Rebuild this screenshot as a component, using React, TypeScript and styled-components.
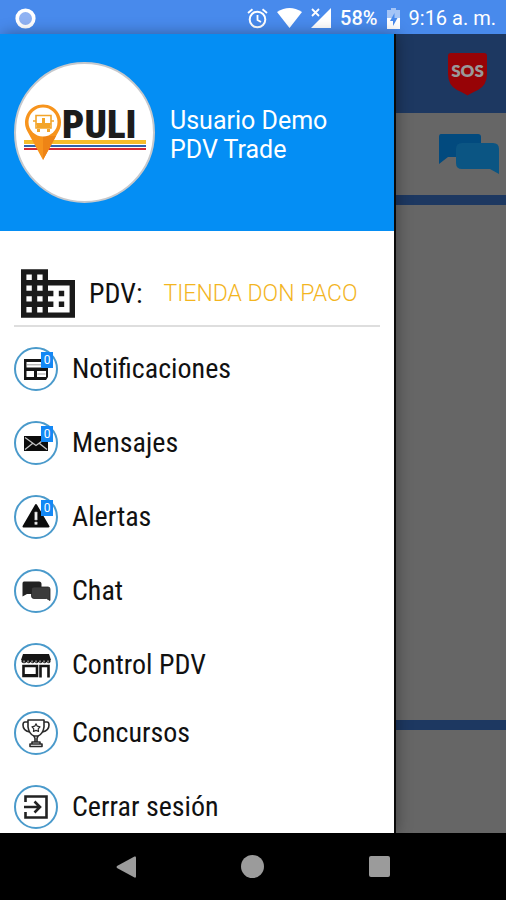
import React from "react";
import styled, { createGlobalStyle } from "styled-components";

const GlobalStyle = createGlobalStyle`
  *, *::before, *::after { box-sizing: border-box; }
  body { margin: 0; background: #000; font-family: Roboto, "Noto Sans", sans-serif; }
  button { font: inherit; color: inherit; background: none; border: 0; padding: 0; cursor: pointer; }
  svg { display: block; flex: none; }
`;

const CONDENSED = `"Roboto Condensed", "Liberation Sans Narrow", Roboto, sans-serif`;

const Screen = styled.div`
  display: flex;
  flex-direction: column;
  min-height: 100vh;
`;

const StatusBar = styled.header`
  display: flex;
  align-items: center;
  justify-content: space-between;
  height: 34px;
  padding: 2px 10px 0 15px;
  background: #488aec;
  color: #fff;
`;

const StatusIcons = styled.div`
  display: flex;
  align-items: center;
  gap: 9px;
`;

const StatusText = styled.span<{ $bold?: boolean }>`
  font-size: 20px;
  line-height: 24px;
  font-weight: ${(p) => (p.$bold ? 500 : 400)};
`;

const Stage = styled.div`
  position: relative;
  display: flex;
  flex: 1;
`;

const HomePage = styled.main`
  display: flex;
  flex: 1;
  flex-direction: column;
  background: #666;
`;

const HomeToolbar = styled.div`
  display: flex;
  justify-content: flex-end;
  height: 79px;
  padding: 18px 18px 0 0;
  background: #1d3861;
`;

const HomeActions = styled.div`
  display: flex;
  justify-content: flex-end;
  height: 82px;
  padding: 20px 6px 0 0;
`;

const Stripe = styled.div`
  height: 10px;
  background: #1d3861;
`;

const HomeBody = styled.div`
  flex: 1;
`;

const HomeFooter = styled.div`
  height: 103px;
`;

const Drawer = styled.aside`
  position: absolute;
  inset: 0 112px 0 0;
  display: flex;
  flex-direction: column;
  background: #fff;
  box-shadow: 2px 0 0 #0a0a0a, 3px 0 14px rgba(0, 0, 0, 0.35);
`;

const Profile = styled.div`
  display: flex;
  align-items: center;
  gap: 15px;
  height: 197px;
  padding: 0 14px;
  background: #048ef4;
`;

const Avatar = styled.div`
  flex: none;
  width: 141px;
  height: 141px;
  overflow: hidden;
  border: 2px solid #c6c8cc;
  border-radius: 50%;
  background: #fff;
`;

const UserName = styled.p`
  margin: 0 0 -4px;
  color: #fff;
  font-size: 25px;
  line-height: 29px;
`;

const StoreRow = styled.div`
  display: flex;
  align-items: center;
  height: 65px;
  margin: 31px 14px 0;
  padding-left: 7px;
  border-bottom: 2px solid #dedede;
`;

const StoreLabel = styled.span`
  margin-left: 14px;
  color: #111;
  font-family: ${CONDENSED};
  font-size: 28px;
  line-height: 32px;
`;

const StoreName = styled.span`
  margin-left: 21px;
  color: #f3b51f;
  font-size: 23px;
  font-weight: 300;
  line-height: 32px;
  white-space: nowrap;
`;

const Menu = styled.nav`
  display: flex;
  flex-direction: column;
  gap: 24px;
  padding: 20px 14px 0;
`;

const MenuGroup = styled.ul`
  display: flex;
  flex-direction: column;
  gap: 30px;
  margin: 0;
  padding: 0;
  list-style: none;
`;

const MenuButton = styled.button`
  display: flex;
  align-items: center;
  gap: 14px;
  width: 100%;
  color: #111;
  text-align: left;
  font-family: ${CONDENSED};
  font-size: 28px;
  line-height: 32px;
`;

const IconCircle = styled.span`
  position: relative;
  display: flex;
  flex: none;
  align-items: center;
  justify-content: center;
  width: 44px;
  height: 44px;
  border: 2px solid #4a9acb;
  border-radius: 50%;
`;

const Badge = styled.span`
  position: absolute;
  top: 3px;
  right: 3px;
  width: 12px;
  height: 16px;
  background: #1488f5;
  color: #fff;
  font-family: Roboto, sans-serif;
  font-size: 12px;
  line-height: 16px;
  text-align: center;
`;

const NavBar = styled.footer`
  display: flex;
  align-items: center;
  justify-content: space-around;
  height: 67px;
  padding: 0 63px;
  background: #000;
`;

const NavButton = styled.button`
  display: flex;
  align-items: center;
  justify-content: center;
  width: 48px;
  height: 48px;
`;

const PuliLogo = () => (
  <svg width="137" height="137" viewBox="16 64 137 137" role="img" aria-label="PULI">
    <rect x="24" y="140" width="122" height="4" fill="#f5bd2c" />
    <rect x="24" y="144" width="122" height="1" fill="#fff" />
    <rect x="24" y="145" width="122" height="2" fill="#2f62ae" />
    <rect x="24" y="148" width="122" height="2" fill="#d02a36" />
    <path d="M43 160 L27.200 131 A18 18 0 1 1 58.800 131 Z" fill="#f7941d" />
    <path d="M43 160 V136 H56 Z" fill="#ee8416" />
    <circle cx="43" cy="122" r="14.5" fill="#fff" />
    <g fill="none" stroke="#f3a52a" strokeWidth="1.6">
      <path d="M36 115.500 H51 V128 H36 Z M36 124 H51 M33 121 H36 M51 121 H54" />
    </g>
    <path d="M37 123 h13 v5 h-13z M37 129 h3 v3 h-3z M47 129 h3 v3 h-3z M42 118 h3 v5 h-3z" fill="#f3a52a" />
    <text x="62" y="138" fontFamily="Roboto Condensed, Roboto, sans-serif" fontWeight="900" fontSize="39" fill="#1c1c1c">
      PULI
    </text>
  </svg>
);

const BuildingIcon = () => (
  <svg width="54" height="49" viewBox="2 3 20 18" fill="#1a1a1a" aria-hidden="true">
    <path d="M12 7V3H2v18h20V7H12zM6 19H4v-2h2v2zm0-4H4v-2h2v2zm0-4H4V9h2v2zm0-4H4V5h2v2zm4 12H8v-2h2v2zm0-4H8v-2h2v2zm0-4H8V9h2v2zm0-4H8V5h2v2zm10 12h-8v-2h2v-2h-2v-2h2v-2h-2V9h8v10zm-2-8h-2v2h2v-2zm0 4h-2v2h2v-2z" />
  </svg>
);

const glyph = { width: 32, height: 32, viewBox: "0 0 32 32", "aria-hidden": true } as const;

const NewsIcon = () => (
  <svg {...glyph}>
    <path d="M4 6 H28 V24 L26 27 H4 Z" fill="#151515" />
    <path d="M6.500 9 H26 V14.500 H6.500 Z M6.500 18 H14 V24 H6.500 Z M17 18 H26 V24 H17 Z" fill="#fff" />
    <path d="M7 11.800 H25.500 M17.500 21 H25.500" stroke="#999" strokeWidth="1" />
  </svg>
);

const MailIcon = () => (
  <svg {...glyph}>
    <rect x="4" y="9" width="24" height="15" fill="#0c0c0c" />
    <path d="M5 10.500 L16 18.500 L27 10.500 M5 22.500 L12.500 16.500 M27 22.500 L19.500 16.500" fill="none" stroke="#c4c4c4" strokeWidth="1.300" />
  </svg>
);

const AlertIcon = () => (
  <svg {...glyph}>
    <path d="M16 4 L28.500 25.500 H3.500 Z" fill="#0c0c0c" stroke="#0c0c0c" strokeWidth="2" strokeLinejoin="round" />
    <path d="M14.800 11 h2.400 v8 h-2.400z M14.800 21 h2.400 v2.400 h-2.400z" fill="#fff" stroke="#aaa" strokeWidth=".6" />
  </svg>
);

const ChatIcon = () => (
  <svg {...glyph}>
    <path d="M4 6.500 H19 Q21.500 6.500 21.500 9 V17 Q21.500 19 19 19 H7 L2.500 21.500 V8.500 Q2.500 6.500 4 6.500Z" fill="#222" />
    <path d="M14 12 H28 Q30 12 30 14 V25.500 L26.500 23.500 H14 Q11.500 23.500 11.500 21 V14 Q11.500 12 14 12Z" fill="#3c3c3c" stroke="#222" strokeWidth=".8" />
  </svg>
);

const StoreIcon = () => (
  <svg {...glyph}>
    <path d="M3 5 H29 L31 11 H1 Z" fill="#151515" />
    <path d="M1.500 11 H30.500 V13 Q28.500 15.500 26.500 13 Q24.500 15.500 22.500 13 Q20.500 15.500 18.500 13 Q16.500 15.500 14.500 13 Q12.500 15.500 10.500 13 Q8.500 15.500 6.500 13 Q4 15.500 1.500 13Z" fill="#151515" />
    <path d="M4 11.500 v2 M8 11.500 v2 M12 11.500 v2 M16 11.500 v2 M20 11.500 v2 M24 11.500 v2 M28 11.500 v2" stroke="#ddd" strokeWidth="1" />
    <path d="M3.500 17 H17 V27 H3.500 Z M20.500 28.500 V17 H28.500 V28.500" fill="none" stroke="#151515" strokeWidth="2.600" />
    <path d="M3 25 H17 V28 H3 Z" fill="#151515" />
  </svg>
);

const TrophyIcon = () => (
  <svg {...glyph} fill="none" stroke="#2a2a2a" strokeWidth="1.600" strokeLinejoin="round">
    <path d="M8 3 H24 V10 Q23 17 18 19 H14 Q9 17 8 10 Z" />
    <path d="M8 5 H5 Q3 5 3 8 Q3 13.500 9.500 15 M24 5 H27 Q29 5 29 8 Q29 13.500 22.500 15" />
    <path d="M16 6.800 L17.300 9.200 L20 9.800 L18.200 11.800 L18.500 14.500 L16 13.400 L13.500 14.500 L13.800 11.800 L12 9.800 L14.700 9.200 Z" strokeWidth="1.200" />
    <path d="M14 19 L15 21.500 V25 M18 19 L17 21.500 V25 M12 25 H20 V27 H12 Z M10 27 H22 V29.500 H10 Z" />
  </svg>
);

const ExitIcon = () => (
  <svg {...glyph} fill="none" stroke="#222" strokeWidth="2.600">
    <path d="M5.500 11 V5.500 H26.500 V26.500 H5.500 V21" />
    <path d="M4 16 H19 M14.500 10.500 L20 16 L14.500 21.500" />
  </svg>
);

const SosIcon = () => (
  <svg width="41" height="44" viewBox="0 0 41 44" role="img" aria-label="SOS">
    <path d="M4 1 H37 Q40 1 40 4 V22 Q40 33 31 38 Q24 41 20.500 43.500 Q17 41 10 38 Q1 33 1 22 V4 Q1 1 4 1Z" fill="#970306" />
    <text x="20.500" y="25" textAnchor="middle" fontFamily="Lato, sans-serif" fontWeight="800" fontSize="17" fill="#999">
      SOS
    </text>
  </svg>
);

const TalkIcon = () => (
  <svg width="62" height="42" viewBox="0 0 62 42" aria-hidden="true">
    <path d="M3 1 H40 Q43 1 43 4 V21 Q43 24 40 24 H10 L1 31 V4 Q1 1 3 1Z" fill="#024a7e" />
    <path d="M24 10 H55 Q61 10 61 16 V41 L52 36 H24 Q18 36 18 30 V16 Q18 10 24 10Z" fill="#0b5583" />
  </svg>
);

type Item = { label: string; Icon: React.FC; badge?: number };

const mainItems: Item[] = [
  { label: "Notificaciones", Icon: NewsIcon, badge: 0 },
  { label: "Mensajes", Icon: MailIcon, badge: 0 },
  { label: "Alertas", Icon: AlertIcon, badge: 0 },
  { label: "Chat", Icon: ChatIcon },
  { label: "Control PDV", Icon: StoreIcon },
];

const accountItems: Item[] = [
  { label: "Concursos", Icon: TrophyIcon },
  { label: "Cerrar sesión", Icon: ExitIcon },
];

const MenuList = ({ items }: { items: Item[] }) => (
  <MenuGroup>
    {items.map(({ label, Icon, badge }) => (
      <li key={label}>
        <MenuButton type="button">
          <IconCircle>
            <Icon />
            {badge !== undefined && <Badge>{badge}</Badge>}
          </IconCircle>
          {label}
        </MenuButton>
      </li>
    ))}
  </MenuGroup>
);

export default function App() {
  return (
    <Screen>
      <GlobalStyle />
      <StatusBar>
        <svg width="21" height="21" viewBox="0 0 21 21" aria-hidden="true">
          <circle cx="10.500" cy="10.500" r="8.300" fill="#8fb2f3" stroke="#fff" strokeWidth="3.600" />
        </svg>
        <StatusIcons>
          <svg width="21" height="21" viewBox="0 0 21 21" fill="none" stroke="#fff" strokeWidth="2" aria-hidden="true">
            <circle cx="10.500" cy="11.500" r="7.800" />
            <path d="M10.500 7 V12 L14 14 M1 5 L5.500 1.200 M20 5 L15.500 1.200" strokeWidth="1.800" />
          </svg>
          <svg width="25" height="20" viewBox="0 0 25 20" fill="#fff" aria-hidden="true">
            <path d="M0 4 Q12.500 -4 25 4 L12.500 20 Z" />
          </svg>
          <svg width="20" height="20" viewBox="0 0 20 20" aria-hidden="true">
            <path d="M20 0 V20 H0 Z" fill="#fff" />
            <path d="M1 1 L8 8 M8 1 L1 8" stroke="#488aec" strokeWidth="4" />
            <path d="M1 1 L8 8 M8 1 L1 8" stroke="#fff" strokeWidth="1.800" />
          </svg>
          <StatusText $bold>58%</StatusText>
          <svg width="13" height="21" viewBox="0 0 13 21" aria-hidden="true">
            <path d="M4 0 H9 V2 H13 V10 H0 V2 H4Z" fill="#a4c4f6" />
            <path d="M0 10 H13 V21 H0Z" fill="#fff" />
            <path d="M7.500 5 L3 13 H6 V18 L10.500 10 H7.500Z" fill="#488aec" />
          </svg>
          <StatusText>9:16 a. m.</StatusText>
        </StatusIcons>
      </StatusBar>

      <Stage>
        <HomePage>
          <HomeToolbar>
            <SosIcon />
          </HomeToolbar>
          <HomeActions>
            <TalkIcon />
          </HomeActions>
          <Stripe />
          <HomeBody />
          <Stripe />
          <HomeFooter />
        </HomePage>

        <Drawer>
          <Profile>
            <Avatar>
              <PuliLogo />
            </Avatar>
            <UserName>
              Usuario Demo
              <br />
              PDV Trade
            </UserName>
          </Profile>
          <StoreRow>
            <BuildingIcon />
            <StoreLabel>PDV:</StoreLabel>
            <StoreName>TIENDA DON PACO</StoreName>
          </StoreRow>
          <Menu aria-label="Menú">
            <MenuList items={mainItems} />
            <MenuList items={accountItems} />
          </Menu>
        </Drawer>
      </Stage>

      <NavBar>
        <NavButton type="button" aria-label="Atrás">
          <svg width="20" height="22" viewBox="0 0 20 22" fill="#9b9b9b" aria-hidden="true">
            <path d="M18.500 .5 Q20 0 20 1.500 V20.500 Q20 22 18.500 21.500 L1 12 Q0 11 1 10Z" />
          </svg>
        </NavButton>
        <NavButton type="button" aria-label="Inicio">
          <svg width="23" height="23" viewBox="0 0 23 23" fill="#9b9b9b" aria-hidden="true">
            <circle cx="11.500" cy="11.500" r="11.500" />
          </svg>
        </NavButton>
        <NavButton type="button" aria-label="Recientes">
          <svg width="21" height="21" viewBox="0 0 21 21" fill="#9b9b9b" aria-hidden="true">
            <rect width="21" height="21" rx="2" />
          </svg>
        </NavButton>
      </NavBar>
    </Screen>
  );
}
